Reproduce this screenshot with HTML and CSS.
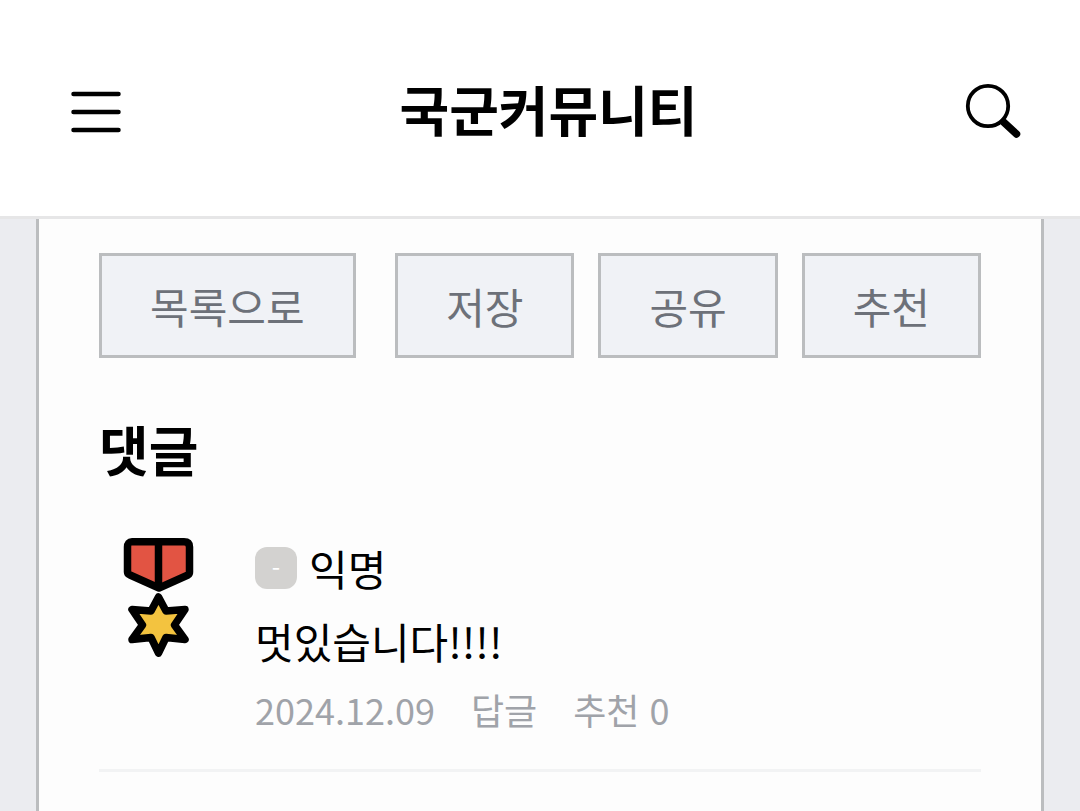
FILE: index.html
```
<!DOCTYPE html>
<html lang="ko">
<head>
    <meta charset="UTF-8">
    <meta name="viewport" content="width=device-width, initial-scale=1.0">
    <title>국군커뮤니티</title>
    <link rel="stylesheet" href="styles.css">
</head>
<body>
    <header class="header">
        <button type="button" class="icon-btn" aria-label="메뉴">
            <svg class="icon-menu" viewBox="0 0 72 72" fill="none" stroke="#000" stroke-width="4.500" stroke-linecap="round">
                <path d="M13.500 18H58.500M13.500 36H58.500M13.500 54H58.500"/>
            </svg>
        </button>
        <h1 class="site-title">국군커뮤니티</h1>
        <button type="button" class="icon-btn" aria-label="검색">
            <svg class="icon-search" viewBox="0 0 64 72" fill="none" stroke="#000" stroke-linecap="round">
                <circle cx="23" cy="30" r="20.200" stroke-width="3.800"/>
                <path d="M38.500 46L51.500 58" stroke-width="7.500"/>
            </svg>
        </button>
    </header>

    <main class="panel">
        <!-- 게시글 버튼 -->
        <div class="actions">
            <button type="button" class="btn">목록으로</button>
            <div class="actions-right">
                <button type="button" class="btn">저장</button>
                <button type="button" class="btn">공유</button>
                <button type="button" class="btn">추천</button>
            </div>
        </div>

        <!-- 댓글 -->
        <section class="comments">
            <h2 class="comments-title">댓글</h2>
            <article class="comment">
                <svg class="avatar" viewBox="0 0 120 120" stroke="#000" stroke-width="7.500" stroke-linejoin="round">
                    <path d="M33 3.800H85Q90.500 3.800 90.500 9V34Q90.500 36 89 37L60 50L31 37Q28.500 36 28.500 34V9Q28.500 3.800 33 3.800Z" fill="#e25443"/>
                    <path d="M59.500 4V50"/>
                    <path d="M59.500 59L67 73L86 71.500L75.500 87L86 101.500L67 99.500L59.500 115L52 99.500L33 101.500L43.500 87L33 71.500L52 73Z" fill="#f3c33f"/>
                </svg>
                <div class="comment-body">
                    <div class="comment-author">
                        <span class="rank">-</span>
                        <span class="name">익명</span>
                    </div>
                    <p class="comment-text">멋있습니다!!!!</p>
                    <div class="comment-meta">
                        <span>2024.12.09</span>
                        <a href="#">답글</a>
                        <a href="#">추천 0</a>
                    </div>
                </div>
            </article>
        </section>
    </main>
</body>
</html>
```

FILE: styles.css
```
* {
    box-sizing: border-box;
}
body {
    display: flex;
    flex-direction: column;
    min-height: 100vh;
    margin: 0;
    font-family: "Noto Sans CJK KR", sans-serif;
    background-color: #ebecf0;
    color: #000;
}
button {
    font: inherit;
    cursor: pointer;
}
h1, h2, p {
    margin: 0;
}
.header {
    display: flex;
    align-items: flex-start;
    justify-content: space-between;
    padding: 72px 51px 64px 60px;
    background-color: #fff;
    border-bottom: 3px solid #e6e6e7;
}
.icon-btn {
    display: flex;
    padding: 4px 0;
    border: none;
    background: none;
}
.icon-menu {
    width: 72px;
    height: 72px;
}
.icon-search {
    width: 64px;
    height: 72px;
}
.site-title {
    font-size: 54px;
    line-height: 74px;
    font-weight: 700;
}
.panel {
    flex: 1;
    margin: 0 36px;
    padding: 34px 60px;
    background-color: #fdfdfd;
    border: solid #bbbdbf;
    border-width: 0 3px;
}
.actions {
    display: flex;
    justify-content: space-between;
}
.actions-right {
    display: flex;
    gap: 24px;
}
.btn {
    padding: 18px 48px;
    border: 3px solid #bbbdbf;
    background-color: #f0f2f6;
    color: #6d7179;
    font-size: 42px;
    line-height: 63px;
}
.comments-title {
    margin-top: 54px;
    font-size: 54px;
    line-height: 74px;
    font-weight: 700;
}
.comment {
    display: flex;
    gap: 36px;
    padding: 52px 0 33px;
    border-bottom: 3px solid #f2f3f4;
}
.avatar {
    flex: none;
    width: 120px;
    height: 120px;
}
.comment-body {
    flex: 1;
    font-size: 42px;
    line-height: 60px;
}
.comment-author {
    display: flex;
    align-items: center;
    gap: 12px;
}
.rank {
    width: 42px;
    height: 42px;
    border-radius: 12px;
    background-color: #d3d2d0;
    color: #fff;
    font-size: 24px;
    line-height: 42px;
    text-align: center;
}
.comment-text {
    margin-top: 13px;
}
.comment-meta {
    display: flex;
    gap: 36px;
    margin-top: 11px;
    font-size: 36px;
    line-height: 54px;
    color: #a0a3a9;
}
.comment-meta a {
    color: inherit;
    text-decoration: none;
}
```
